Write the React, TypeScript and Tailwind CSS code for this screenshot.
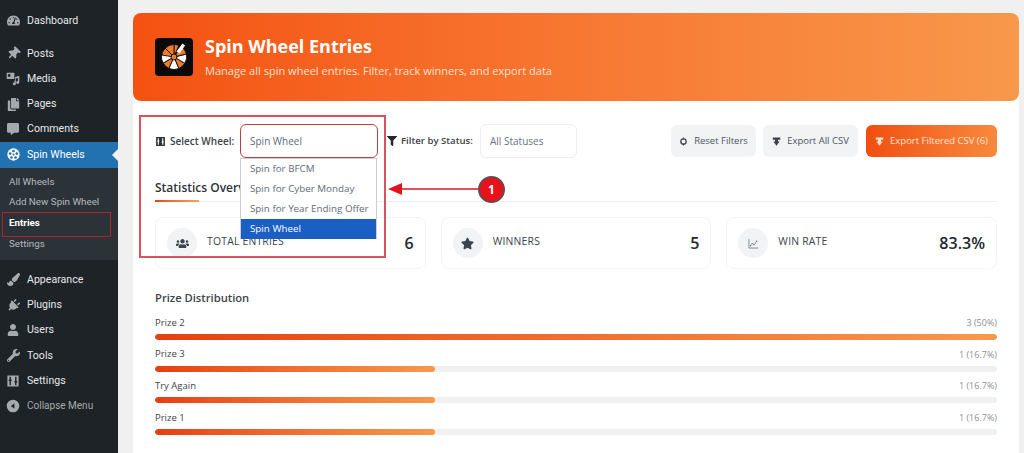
import React from "react";
import { FaTachometerAlt, FaThumbtack, FaCopy, FaCommentAlt, FaPaintBrush, FaPlug, FaUser, FaWrench, FaFilter, FaUsers, FaStar } from "react-icons/fa";

const SettingsIcon = ({ className = "" }: { className?: string }) => (
  <svg viewBox="0 0 20 20" className={className} fill="currentColor">
    <path fillRule="evenodd" d="M2 2h16v16H2zM5 4v4H4v2h1v6h2v-6h1V8H7V4zm8 0v6h-1v2h1v4h2v-4h1v-2h-1V4z" />
  </svg>
);

const MediaIcon = ({ className = "" }: { className?: string }) => (
  <svg viewBox="0 0 20 20" className={className} fill="currentColor">
    <path fillRule="evenodd" d="M1 1h11v9H1zm3.5 2a2 2 0 100 4 2 2 0 000-4z" />
    <path d="M13 7l6-1.5v9.5a2.2 2 0 11-2-2V8.5l-3 .8V17a2.2 2 0 11-2-2v-3h1z" />
  </svg>
);

const SpinIcon = ({ className = "" }: { className?: string }) => (
  <svg viewBox="0 0 20 20" className={className}>
    <circle cx="10" cy="10" r="9.5" fill="#fff" />
    <circle cx="10" cy="10" r="1.6" fill="#2271b1" />
    <circle cx="10" cy="4.6" r="2.1" fill="#2271b1" />
    <circle cx="4.8" cy="8.6" r="2.1" fill="#2271b1" />
    <circle cx="15.2" cy="8.6" r="2.1" fill="#2271b1" />
    <circle cx="6.8" cy="14.6" r="2.1" fill="#2271b1" />
    <circle cx="13.2" cy="14.6" r="2.1" fill="#2271b1" />
  </svg>
);

const CollapseIcon = ({ className = "" }: { className?: string }) => (
  <svg viewBox="0 0 20 20" className={className} fill="currentColor">
    <path fillRule="evenodd" d="M10 1a9 9 0 110 18 9 9 0 010-18zm2 5l-5 4 5 4z" />
  </svg>
);

const ExportIcon = ({ className = "" }: { className?: string }) => (
  <svg viewBox="0 0 12 12" className={className} fill="currentColor">
    <path d="M1 0.5h10v3.2H8V6h2.2L6 11.5 1.8 6H4V3.7H1z" />
  </svg>
);

const ResetIcon = ({ className = "" }: { className?: string }) => (
  <svg viewBox="0 0 12 12" className={className} fill="none" stroke="currentColor">
    <circle cx="6" cy="6" r="3.6" strokeWidth="1.7" />
    <path d="M6 0.5V3M6 9V11.5" strokeWidth="1.2" />
  </svg>
);

const ChartIcon = ({ className = "" }: { className?: string }) => (
  <svg viewBox="0 0 20 20" className={className} fill="none" stroke="currentColor" strokeWidth="1.2">
    <path d="M3 3v14h14" />
    <path d="M5 14l3-4 3 2 5-7" strokeWidth="1.6" strokeDasharray="2.5 1" />
  </svg>
);

const WheelLogo = () => (
  <svg viewBox="0 0 38 38" className="w-[38px] h-[38px] shrink-0">
    <rect width="38" height="38" rx="4" fill="#0a0a0a" />
    <g stroke="#0a0a0a" strokeWidth="0.9">
      <path d="M19 19L19 6.5A12.5 12.5 0 0 1 23.8 7.5Z" fill="#ee7a2c" />
      <path d="M19 19L19 6.5A12.5 12.5 0 0 0 10.2 10.2Z" fill="#ee7a2c" />
      <path d="M19 19L10.2 10.2A12.5 12.5 0 0 0 6.5 19Z" fill="#ee7a2c" />
      <path d="M19 19L6.5 17A12.5 12.5 0 0 0 8.2 25.2Z" fill="#fff" />
      <path d="M19 19L8.2 25.2A12.5 12.5 0 0 0 14 30.5Z" fill="#ee7a2c" />
      <path d="M19 19L14 30.5A12.5 12.5 0 0 0 24 30.5Z" fill="#fff" />
      <path d="M19 19L24 30.5A12.5 12.5 0 0 0 29.8 25.2Z" fill="#ee7a2c" />
      <path d="M19 19L29.8 25.2A12.5 12.5 0 0 0 31.5 16Z" fill="#fff" />
      <path d="M19 19L31.5 16A12.5 12.5 0 0 0 26 8.5Z" fill="#ee7a2c" />
    </g>
    <path d="M21.5 13.5L27.5 5.5L30 7.5L24.5 15.5Z" fill="#fff" />
    <circle cx="19" cy="19" r="3" fill="#ee7a2c" stroke="#0a0a0a" strokeWidth="1" />
  </svg>
);

const NavItem = ({ icon, label, dim = false }: { icon: React.ReactNode; label: string; dim?: boolean }) => (
  <div className={`h-[25.2px] flex items-center pl-[6px] font-['Roboto',sans-serif] ${dim ? "text-[#a7aaad] text-[10px]" : "text-[#e6e8ea] text-[10.6px]"}`}>
    <span className="w-[14px] h-[14px] flex items-center justify-center text-[#a7aaad] mr-[7px] shrink-0">{icon}</span>
    {label}
  </div>
);

const SubItem = ({ label, strong = false, cls = "" }: { label: string; strong?: boolean; cls?: string }) => (
  <div className={`flex items-center pl-[9px] text-[9.8px] font-['Roboto',sans-serif] ${strong ? "text-white font-bold" : "text-[#b4b9be]"} ${cls}`}>{label}</div>
);

const Sidebar = () => (
  <aside className="w-[118px] shrink-0 bg-[#1d2327] pt-[8px] h-full">
    <NavItem icon={<FaTachometerAlt className="w-[13px] h-[13px]" />} label="Dashboard" />
    <div className="h-[8px]" />
    <NavItem icon={<FaThumbtack className="w-[13px] h-[13px] rotate-45" />} label="Posts" />
    <NavItem icon={<MediaIcon className="w-[14px] h-[14px]" />} label="Media" />
    <NavItem icon={<FaCopy className="w-[13px] h-[13px]" />} label="Pages" />
    <NavItem icon={<FaCommentAlt className="w-[12px] h-[12px]" />} label="Comments" />
    <div className="relative h-[26px] bg-[#2271b1] flex items-center pl-[7px] text-[10.6px] text-white font-['Roboto',sans-serif]">
      <SpinIcon className="w-[13px] h-[13px] mr-[7px]" />
      Spin Wheels
      <span className="absolute right-0 top-[7px] border-y-[6px] border-y-transparent border-r-[6px] border-r-[#f0f0f1]" />
    </div>
    <div className="bg-[#2c3338] h-[92px] pt-[4px]">
      <SubItem label="All Wheels" cls="h-[20px]" />
      <SubItem label="Add New Spin Wheel" cls="h-[21px]" />
      <SubItem label="Entries" strong cls="h-[21px]" />
      <SubItem label="Settings" cls="h-[20px]" />
    </div>
    <div className="h-[7.4px]" />
    <NavItem icon={<FaPaintBrush className="w-[13px] h-[13px]" />} label="Appearance" />
    <NavItem icon={<FaPlug className="w-[13px] h-[13px] rotate-45" />} label="Plugins" />
    <NavItem icon={<FaUser className="w-[12px] h-[12px]" />} label="Users" />
    <NavItem icon={<FaWrench className="w-[13px] h-[13px]" />} label="Tools" />
    <NavItem icon={<SettingsIcon className="w-[14px] h-[14px]" />} label="Settings" />
    <NavItem icon={<CollapseIcon className="w-[14px] h-[14px]" />} label="Collapse Menu" dim />
  </aside>
);

const Stat = ({ icon, label, value }: { icon: React.ReactNode; label: string; value: string }) => (
  <div className="flex-1 h-[52px] bg-white border border-[#f4f4f5] rounded-lg flex pl-[11px] pr-[11px] pt-[10px] text-[#2d3338]">
    <div className="w-[30px] h-[30px] rounded-full bg-[#f2f3f5] flex items-center justify-center text-[#3a4350] shrink-0">{icon}</div>
    <div className="ml-[10px] mt-[6px] text-[10.4px] leading-[14px] tracking-[0.2px] font-medium text-[#3c434a]">{label}</div>
    <div className="ml-auto mt-[3px] text-[16px] leading-[24px] font-semibold text-[#23282d]">{value}</div>
  </div>
);

const Bar = ({ label, count, pct, filled }: { label: string; count: string; pct: string; filled: boolean }) => (
  <div className="h-[31.6px]">
    <div className="flex justify-between h-[16px] items-center text-[9.5px] leading-none">
      <span className="text-[#3c434a] font-medium -mt-[1px]">{label}</span>
      <span className="text-[#8a9096] text-[9px] -mt-[1px]">{count}</span>
    </div>
    <div className="mt-[3px] h-[6px] rounded-full bg-[#f0f0f1] overflow-hidden">
      <div className="h-full rounded-full bg-gradient-to-r from-[#e63e10] to-[#f7984a]" style={{ width: filled ? "100%" : pct }} />
    </div>
  </div>
);

const Btn = ({ icon, label, cls }: { icon: React.ReactNode; label: string; cls: string }) => (
  <div className={`h-[32px] rounded-md flex items-center justify-center text-[9.5px] font-medium ${cls}`}>
    {icon}
    {label}
  </div>
);

export default function App() {
  return (
    <div className="relative w-[1024px] h-[453px] overflow-hidden bg-[#f0f0f1] flex font-['Open_Sans','Noto_Sans',sans-serif]">
      <Sidebar />
      <main className="flex-1 pl-[15px] pr-[5px] pt-[13px] min-w-0">
        <div className="h-full bg-white rounded-t-lg">
          <header className="h-[88px] rounded-lg bg-gradient-to-r from-[#f4510f] to-[#f8984a] flex items-center pl-[22px] text-white">
            <WheelLogo />
            <div className="ml-[12px] -mt-[1px]">
              <h1 className="text-[18px] leading-[24px] font-bold">Spin Wheel Entries</h1>
              <p className="text-[11.06px] leading-[16px] mt-[5px] text-[#fde0cd]">Manage all spin wheel entries. Filter, track winners, and export data</p>
            </div>
          </header>

          <div className="pl-[22px] pr-[22px]">
            <div className="flex items-center h-[34px] mt-[23px]">
              <SettingsIcon className="w-[11px] h-[11px] text-[#2d3338] mr-[4px]" />
              <span className="text-[10px] font-semibold text-[#3c434a] w-[70px]">Select Wheel:</span>
              <div className="w-[138px] h-[34px] border-[1.5px] border-[#c2403f] rounded-md flex items-center pl-[9px] text-[10px] text-[#5f6b7a]">Spin Wheel</div>
              <FaFilter className="w-[10px] h-[10px] text-[#23282d] ml-[9px] mr-[4px]" />
              <span className="text-[9.6px] font-semibold text-[#3c434a] w-[79px]">Filter by Status:</span>
              <div className="w-[97px] h-[34px] border border-[#eceef0] rounded-md flex items-center pl-[9px] text-[10px] text-[#6b7280]">All Statuses</div>
              <div className="ml-auto flex gap-[7px]">
                <Btn icon={<ResetIcon className="w-[9px] h-[9px] mr-[6px] text-[#3c434a]" />} label="Reset Filters" cls="w-[85px] bg-[#f1f3f5] text-[#4b5563]" />
                <Btn icon={<ExportIcon className="w-[9px] h-[9px] mr-[6px] text-[#3c434a]" />} label="Export All CSV" cls="w-[95px] bg-[#f1f3f5] text-[#4b5563]" />
                <Btn icon={<ExportIcon className="w-[9px] h-[9px] mr-[6px] text-[#fde0cd]" />} label="Export Filtered CSV (6)" cls="w-[131px] ml-[1px] bg-gradient-to-r from-[#f04e0e] to-[#f7893c] text-[#fde4d4]" />
              </div>
            </div>

            <div className="relative mt-[21px] h-[23px] border-b border-[#eeeeef]">
              <h2 className="text-[12px] leading-[18px] font-semibold text-[#2d3338]">Statistics Overview</h2>
              <span className="absolute left-0 -bottom-px w-[44px] h-[2px] bg-gradient-to-r from-[#e8420f] to-[#f7a35c]" />
            </div>

            <div className="flex gap-[15px] mt-[15px]">
              <Stat icon={<FaUsers className="w-[13px] h-[13px]" />} label="TOTAL ENTRIES" value="6" />
              <Stat icon={<FaStar className="w-[13px] h-[13px]" />} label="WINNERS" value="5" />
              <Stat icon={<ChartIcon className="w-[13px] h-[13px] text-[#6b7280]" />} label="WIN RATE" value="83.3%" />
            </div>

            <h3 className="mt-[20px] text-[11.2px] leading-[18px] font-semibold text-[#3c434a]">Prize Distribution</h3>
            <div className="mt-[8px]">
              <Bar label="Prize 2" count="3 (50%)" pct="100%" filled />
              <Bar label="Prize 3" count="1 (16.7%)" pct="33.3%" filled={false} />
              <Bar label="Try Again" count="1 (16.7%)" pct="33.3%" filled={false} />
              <Bar label="Prize 1" count="1 (16.7%)" pct="33.3%" filled={false} />
            </div>
          </div>
        </div>
      </main>

      {/* dropdown list */}
      <div className="absolute left-[240px] top-[158px] w-[137px] h-[81px] bg-white border border-[#c9ced3] border-b-0 text-[9.8px] text-[#5f6b7a]">
        <div className="h-[20px] flex items-center pl-[9px]">Spin for BFCM</div>
        <div className="h-[20px] flex items-center pl-[9px]">Spin for Cyber Monday</div>
        <div className="h-[20px] flex items-center pl-[9px]">Spin for Year Ending Offer</div>
        <div className="h-[20px] flex items-center pl-[9px] bg-[#1b5fc5] text-white">Spin Wheel</div>
      </div>

      {/* annotations */}
      <div className="absolute left-[139px] top-[115px] w-[247px] h-[143px] border-2 border-[#d9545a]" />
      <div className="absolute left-[2px] top-[212px] w-[109px] h-[25px] border-[1.5px] border-[#b3202c]" />
      <svg className="absolute left-[386px] top-[170px] w-[125px] h-[38px]" viewBox="0 0 125 38">
        <path d="M2 19L16 13V25Z" fill="#e0141e" />
        <path d="M14 19H92" stroke="#e0141e" strokeWidth="1.5" />
      </svg>
      <div className="absolute left-[478px] top-[176px] w-[27px] h-[27px] rounded-full bg-[#e8111c] border-2 border-[#6b4a4a] flex items-center justify-center text-white text-[12px] font-bold">1</div>
    </div>
  );
}
